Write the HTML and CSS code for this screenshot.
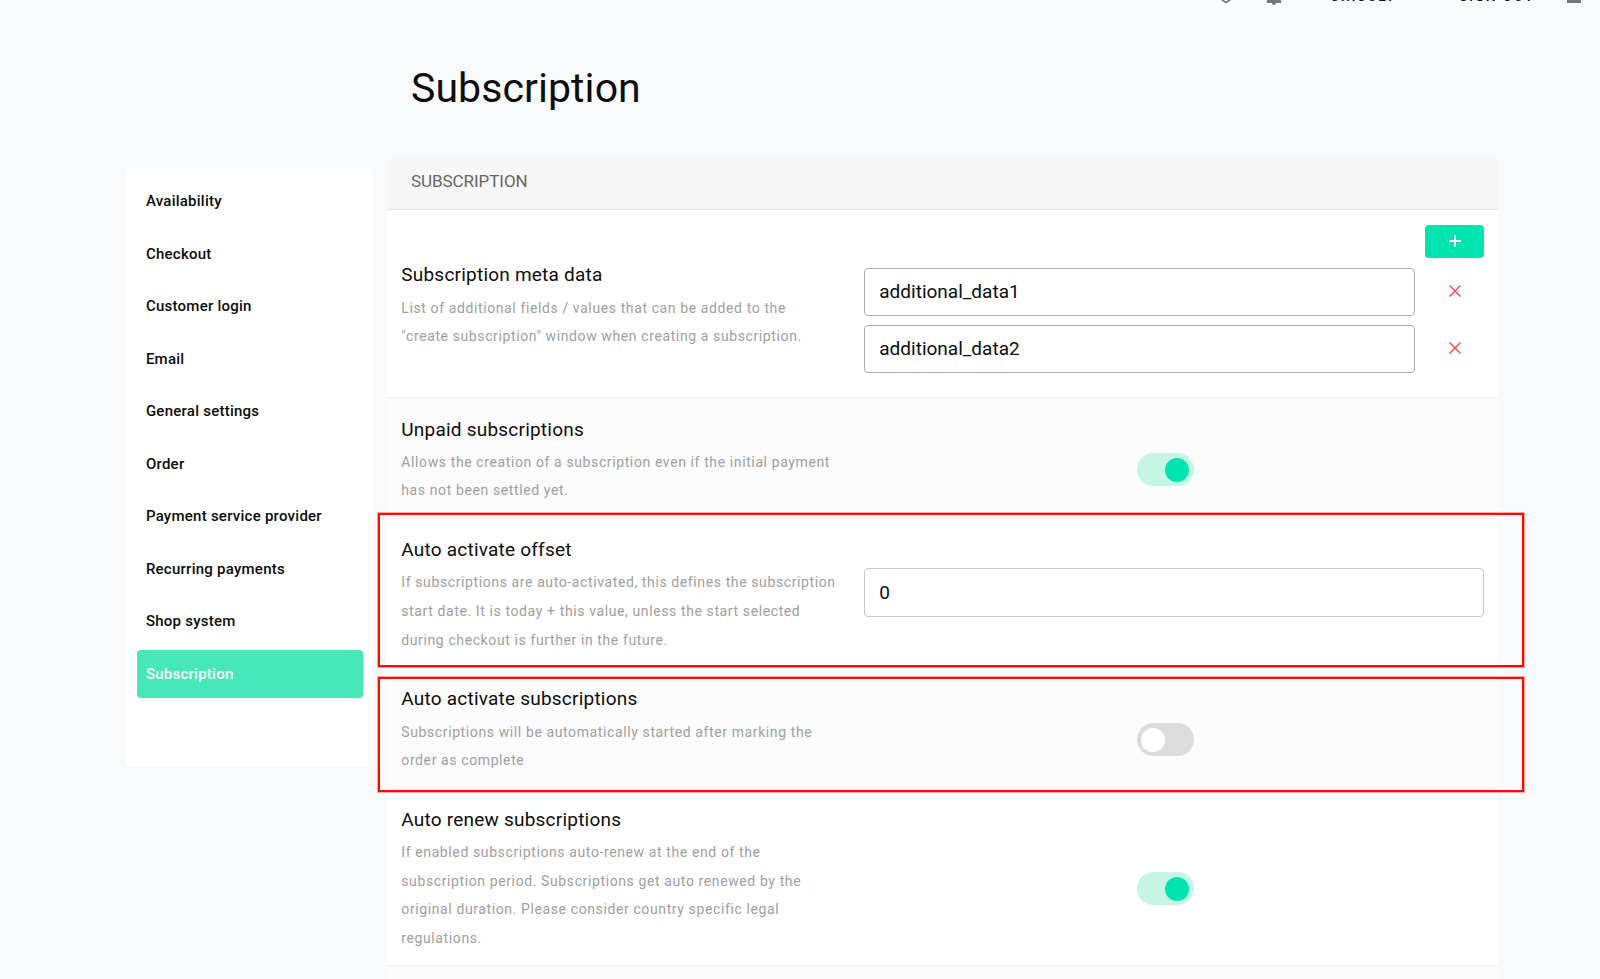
FILE: index.html
```
<!DOCTYPE html>
<html lang="en">

<head>
    <meta charset="UTF-8">
    <meta name="viewport" content="width=device-width, initial-scale=1.0">
    <title>Subscription</title>
    <link rel="stylesheet" href="styles.css">
</head>

<body>
    <header class="topbar">
        <svg class="icon-help" width="22" height="22" viewBox="0 0 22 22">
            <path d="M5 10v6.500l6 4 6-4V10" fill="none" stroke="#777" stroke-width="1.6" />
        </svg>
        <svg class="icon-bell" width="24" height="24" viewBox="0 0 24 24">
            <path d="M12 24c1.100 0 2-.9 2-2h-4c0 1.100.9 2 2 2zm5.500-7v-5c0-3.070-1.630-5.640-4-6.320V4a1.500 1.500 0 0 0-3 0v1.680C8.100 6.360 6.500 8.920 6.500 12v5L4.800 20.300v1.700h14.400v-1.700z" fill="#777" />
        </svg>
        <a class="top-link shop">CIRCULY</a>
        <a class="top-link logout">SIGN OUT</a>
        <span class="menu-icon"></span>
    </header>

    <h1 class="page-title">Subscription</h1>

    <div class="container">
        <nav class="sidebar">
            <a class="nav-item">Availability</a>
            <a class="nav-item">Checkout</a>
            <a class="nav-item">Customer login</a>
            <a class="nav-item">Email</a>
            <a class="nav-item">General settings</a>
            <a class="nav-item">Order</a>
            <a class="nav-item">Payment service provider</a>
            <a class="nav-item">Recurring payments</a>
            <a class="nav-item">Shop system</a>
            <a class="nav-item active">Subscription</a>
        </nav>

        <main class="panel">
            <div class="panel-header">SUBSCRIPTION</div>

            <section class="row meta">
                <div class="info">
                    <h2>Subscription meta data</h2>
                    <p>List of additional fields / values that can be added to the<br>"create subscription" window when creating a subscription.</p>
                </div>
                <div class="field">
                    <button class="add-btn">
                        <svg width="12" height="12" viewBox="0 0 12 12"><path d="M6 0v12M0 6h12" stroke="#fff" stroke-width="1.8" /></svg>
                    </button>
                    <div class="entry">
                        <input type="text" value="additional_data1">
                        <svg class="remove" width="12" height="12" viewBox="0 0 12 12"><path d="M.5.5l11 11M11.500.5l-11 11" stroke="#ff4d4d" stroke-width="1.500" /></svg>
                    </div>
                    <div class="entry">
                        <input type="text" value="additional_data2">
                        <svg class="remove" width="12" height="12" viewBox="0 0 12 12"><path d="M.5.5l11 11M11.500.5l-11 11" stroke="#ff4d4d" stroke-width="1.500" /></svg>
                    </div>
                </div>
            </section>

            <section class="row gray">
                <div class="info">
                    <h2>Unpaid subscriptions</h2>
                    <p>Allows the creation of a subscription even if the initial payment<br>has not been settled yet.</p>
                </div>
                <div class="field switch"><span class="toggle on"></span></div>
            </section>

            <section class="row">
                <div class="info">
                    <h2>Auto activate offset</h2>
                    <p>If subscriptions are auto-activated, this defines the subscription<br>start date. It is today + this value, unless the start selected<br>during checkout is further in the future.</p>
                </div>
                <div class="field"><input class="light" type="text" value="0"></div>
                <div class="highlight first"></div>
            </section>

            <section class="row gray">
                <div class="info">
                    <h2>Auto activate subscriptions</h2>
                    <p>Subscriptions will be automatically started after marking the<br>order as complete</p>
                </div>
                <div class="field switch"><span class="toggle"></span></div>
                <div class="highlight second"></div>
            </section>

            <section class="row">
                <div class="info">
                    <h2>Auto renew subscriptions</h2>
                    <p>If enabled subscriptions auto-renew at the end of the<br>subscription period. Subscriptions get auto renewed by the<br>original duration. Please consider country specific legal<br>regulations.</p>
                </div>
                <div class="field switch"><span class="toggle on"></span></div>
            </section>

            <section class="row gray last"></section>
        </main>
    </div>
</body>

</html>
```
FILE: styles.css
```
* {
    box-sizing: border-box;
}

body {
    margin: 0;
    height: 979px;
    overflow: hidden;
    background-color: #f9fafc;
    font-family: Roboto, sans-serif;
    color: #0c0c0c;
}

.topbar {
    display: flex;
    align-items: flex-end;
    height: 24px;
    margin-top: -20px;
    padding-left: 1215px;
}

.icon-bell {
    margin: 0 0 -1px 25px;
}

.top-link {
    font-size: 14px;
    font-weight: 500;
    line-height: 16px;
    letter-spacing: 1.600px;
    white-space: nowrap;
}

.shop {
    width: 85px;
    margin-left: 44px;
}

.logout {
    width: 76px;
    margin-left: 44px;
}

.menu-icon {
    width: 14px;
    height: 12px;
    margin: 0 0 1px 32px;
    background-color: #777;
}

.page-title {
    margin: 60px 0 0 411px;
    font-size: 41px;
    font-weight: 400;
    line-height: 48px;
    letter-spacing: 0.08px;
}

.container {
    display: flex;
    align-items: flex-start;
    margin-top: 43px;
    padding-left: 126.400px;
}

.sidebar {
    display: flex;
    flex-direction: column;
    gap: 4.500px;
    width: 246.500px;
    height: 597px;
    margin-top: 13px;
    padding: 9px 10px 0 10.500px;
    background-color: #fff;
    border-radius: 4px;
}

.nav-item {
    height: 48px;
    padding-left: 9px;
    border-radius: 4px;
    font-size: 15px;
    font-weight: 500;
    line-height: 48px;
    letter-spacing: 0.25px;
}

.nav-item.active {
    background-color: #46e8b7;
    color: #fff;
}

.panel {
    width: 1111px;
    margin-left: 14.400px;
    background-color: #fff;
    border-radius: 8px 8px 0 0;
}

.panel-header {
    height: 55px;
    padding-left: 23.700px;
    background-color: #f7f7f7;
    border-bottom: 1px solid #e4e4e4;
    border-radius: 8px 8px 0 0;
    color: #666;
    font-size: 17px;
    line-height: 53px;
    letter-spacing: -0.05px;
}

.row {
    display: flex;
    align-items: center;
    position: relative;
    padding: 0 14px;
    border-bottom: 1px solid #f3f3f3;
}

.row.meta {
    height: 188px;
}

.row.gray {
    background-color: #fcfcfc;
}

.row.last {
    height: 13px;
    border-bottom: none;
}

.info {
    width: 463px;
    padding: 17.500px 0 12.800px;
}

.meta .info {
    padding-top: 17.800px;
}

.info h2 {
    margin: 0 0 3.700px;
    font-size: 19px;
    font-weight: 400;
    line-height: 28.500px;
    letter-spacing: 0.22px;
}

.info p {
    margin: 0;
    color: #a0a0a0;
    font-size: 14px;
    line-height: 28.600px;
    letter-spacing: 0.61px;
    white-space: nowrap;
}

.field {
    display: flex;
    flex-direction: column;
    width: 620px;
}

.field input {
    width: 100%;
    height: 48px;
    padding: 0 14px 1px;
    border: 1px solid #adadad;
    border-radius: 4px;
    background-color: #fff;
    color: #0c0c0c;
    font-family: inherit;
    font-size: 19px;
    letter-spacing: 0;
}

.field input.light {
    height: 49px;
    border-color: #c8c8c8;
}

.add-btn {
    display: flex;
    align-items: center;
    justify-content: center;
    align-self: flex-end;
    width: 59.500px;
    height: 33px;
    margin-bottom: 10px;
    padding: 0 0 1px;
    background-color: #00e5b0;
    border: none;
    border-radius: 4px;
}

.entry {
    display: flex;
    align-items: center;
    margin-bottom: 9px;
}

.entry input {
    width: 551px;
    margin-right: 33.300px;
}

.remove {
    margin-bottom: 2px;
}

.field.switch {
    align-items: center;
    padding: 23.500px 18.500px 0 0;
}

.toggle {
    display: flex;
    align-items: center;
    width: 57px;
    height: 33px;
    padding: 0 4.500px;
    border-radius: 17px;
    background-color: #dcdcdc;
}

.toggle::before {
    content: "";
    width: 24px;
    height: 24px;
    border-radius: 50%;
    background-color: #fff;
}

.toggle.on {
    justify-content: flex-end;
    background-color: #c5f5e4;
}

.toggle.on::before {
    background-color: #00e5b0;
}

/* red frames around the two auto activate settings */
.highlight {
    position: absolute;
    z-index: 1;
    left: -9px;
    width: 1145.500px;
    border: 2px solid #ff0800;
    box-shadow: 0 0 0 1px rgba(255, 8, 0, 0.35);
    pointer-events: none;
}

.highlight.first {
    top: -5.500px;
    height: 153.500px;
}

.highlight.second {
    top: 9px;
    height: 115.500px;
}
```
